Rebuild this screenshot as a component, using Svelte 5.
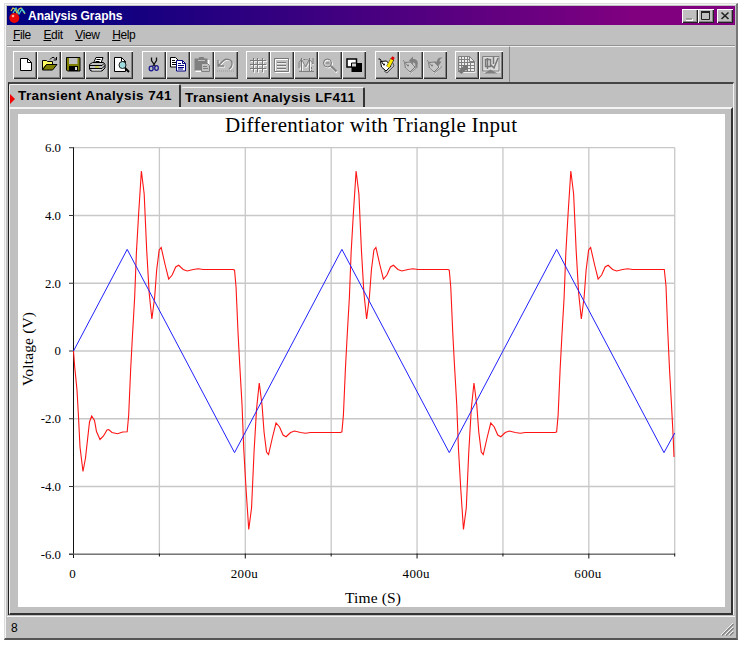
<script>
  const X0 = 73.5, Y0 = 351, PX = 0.8589, PY = 33.88;
  const px = (t) => X0 + t * PX;
  const py = (v) => Y0 - v * PY;

  const vLines = [100, 200, 300, 400, 500, 600, 700].map(px);
  const yTicks = [
    [6, '6.0'], [4, '4.0'], [2, '2.0'], [0, '0'], [-2, '-2.0'], [-4, '-4.0'], [-6, '-6.0']
  ];
  const xTicks = [[0, '0'], [200, '200u'], [400, '400u'], [600, '600u']];

  const triangle = [[0, 0], [62.5, 3], [187.5, -3], [312.5, 3], [437.5, -3], [562.5, 3], [687.5, -3], [700, -2.42]]
    .map(([t, v]) => `${px(t)},${py(v)}`).join(' ');

  // start-up transient, in pixels
  const start = [[73.5, 351], [74.7, 367], [77, 390], [78.5, 417], [80, 447], [83, 471.5], [85.5, 458], [87.7, 438],
    [89.5, 422], [91.7, 416], [94.5, 420.5], [96.5, 431.5], [100, 439.5], [103.5, 436], [107, 430], [108.7, 429.5],
    [112, 432.5], [117.5, 433.8], [122.7, 432]];
  // ringing edge: offset from the switching time and height above the zero line
  const edge = [[0, -80.8], [1.5, -64], [3.5, -18], [5.2, 14], [7.5, 54], [9.2, 98], [11.5, 138], [14.2, 180],
    [17, 157], [19.5, 101], [22, 58], [24.7, 32], [27.5, 54], [29.5, 81], [32, 101], [34, 103.5], [38, 86],
    [41.5, 72], [45, 76], [48.5, 84], [51.5, 85.7], [56, 81.5], [60, 80], [66, 81.5], [71, 82.3], [76, 81.5], [106, 81.5]];
  const response = [...start];
  [62.5, 187.5, 312.5, 437.5, 562.5].forEach((t, i) => {
    const s = i % 2 ? -1 : 1;
    for (const [dx, h] of edge) response.push([px(t) + dx, Y0 - s * h + (s < 0 && h > 170 ? -1.5 : 0)]);
  });
  response.push([664.3, 269.5], [666, 286], [667.7, 330], [669.5, 369], [671.5, 405], [673.2, 437], [674, 457]);
  const responsePts = response.map((p) => p.join(',')).join(' ');

  const menus = ['File', 'Edit', 'View', 'Help'];
  const groups = [
    ['new', 'open', 'save', 'print', 'preview'],
    ['cut', 'copy', 'paste', 'undo'],
    ['grid', 'legend', 'cursors', 'zoom', 'reverse'],
    ['tag', 'tagup', 'tagdown'],
    ['excel', 'mathcad']
  ];
</script>

{#snippet icon(name)}
  <svg class="ico" width="24" height="28" viewBox="0 0 24 28" fill="none">
    {#if name === 'new'}
      <path d="M7.5 7.5h7l4 4v8h-11z" fill="#fff" stroke="#000" /><path d="M14.5 7.5v4h4" stroke="#000" />
    {:else if name === 'open'}
      <path d="M5.5 18.500v-9h4l1 1h5v3h-6z" fill="#ffff60" stroke="#000" />
      <path d="M5.500 19l4-5.500h10.500l-4.500 5.500z" fill="#808000" stroke="#000" />
      <path d="M13 8.500l2-2h2l2 2M19.500 6v3h-3" stroke="#000" />
    {:else if name === 'save'}
      <path d="M5.500 6.500h13.500v13.500h-12.500l-1-1z" fill="#808000" stroke="#000" />
      <path d="M8 7h8.500v6H8z" fill="#c0c0c0" /><path d="M8 15h9v5H8z" fill="#000" /><path d="M14 16h2v3h-2z" fill="#ddd" />
    {:else if name === 'print'}
      <path d="M8.500 12l2.500-5.500h7l-2 5.500z" fill="#fff" stroke="#000" /><path d="M11.500 8.500h4M10.500 10.500h4" stroke="#000" />
      <path d="M4.500 13.500l3-2h11l1.500 2v3.500l-3 3h-11l-1.500-2z" fill="#c0c0c0" stroke="#000" />
      <path d="M5 14.500h12l2-2M5 17.500h12l3-3" stroke="#000" /><path d="M10 16h4" stroke="#cccc00" /><path d="M7 19h9" stroke="#fff" />
    {:else if name === 'preview'}
      <path d="M5.500 6.500h7l4 4v10h-11z" fill="#fff" stroke="#000" /><path d="M12.500 6.500v4h4" stroke="#000" />
      <circle cx="13.500" cy="14" r="3.500" fill="#9edce0" stroke="#222" /><path d="M16 17l4 4" stroke="#000" stroke-width="2" />
    {:else if name === 'cut'}
      <path d="M9.500 6.500v3l4 6M14.500 6.500v3l-4 6" stroke="#111" stroke-width="1.300" />
      <ellipse cx="9.200" cy="17.500" rx="2" ry="2.300" stroke="#1a1a90" stroke-width="1.300" /><ellipse cx="14.500" cy="17" rx="1.800" ry="2.300" stroke="#1a1a90" stroke-width="1.300" />
    {:else if name === 'copy'}
      <path d="M4.500 6.500h5l3 3v6.500h-8z" fill="#fff" stroke="#000" /><path d="M6 9.500h3M6 11.500h5M6 13.500h5" stroke="#000" />
      <path d="M10.500 9.500h6l3 3v7.500h-9z" fill="#fff" stroke="#000080" /><path d="M16.500 9.500v3h3M12 12.500h3M12 14.500h6M12 16.500h6M12 18h5" stroke="#000080" />
    {:else if name === 'paste'}
      <path d="M5.500 9h14v12h-14z" fill="#fff" />
      <path d="M4.500 7.500h4l1-1.500h4l1 1.500h3v12h-13z" fill="#808080" /><path d="M8 9.500h7" stroke="#c0c0c0" />
      <path d="M11.500 12.500h6l2 2v6h-8z" fill="#c0c0c0" stroke="#808080" /><path d="M13 15.500h4M13 17.500h5" stroke="#808080" />
    {:else if name === 'undo'}
      <g stroke="#fff" transform="translate(1 1)"><path d="M4 9v6h6M4.500 14.500l5-5c3-2.500 9-1 8.500 3.500c0 3-2 4-3 5" /></g>
      <path d="M4 9v6h6M4.500 14.500l5-5c3-2.500 9-1 8.500 3.500c0 3-2 4-3 5" stroke="#808080" stroke-width="1.300" /><path d="M3 20h17" stroke="#999" stroke-dasharray="1 1" />
    {:else if name === 'grid'}
      <path d="M8.500 8v14M12.500 8v14M17.500 8v14M5 10.500h16M5 14.500h16M5 18.500h16" stroke="#f4f4f4" />
      <path d="M7.500 7v14M11.500 7v14M16.500 7v14M4 9.500h16M4 13.500h16M4 17.500h16" stroke="#777" />
    {:else if name === 'legend'}
      <path d="M5.500 8.500h14v13h-14z" stroke="#fff" /><path d="M4.500 7.500h14v13h-14z" stroke="#777" />
      <path d="M7 11.500h9M7 14.500h9M7 17.500h9" stroke="#777" /><path d="M7 12.500h9M7 15.500h9M7 18.500h9" stroke="#eee" />
    {:else if name === 'cursors'}
      <path d="M8.500 8v13M16.500 8v13M6 19l2.500-7 4 5 4-7 3 4" stroke="#f4f4f4" />
      <path d="M7.500 7v13M15.500 7v13" stroke="#777" /><path d="M5 17V11M5.500 11l2-3 4 8 4-8 3.500 5v-6M5 20.500h15" stroke="#808080" />
      <path d="M9.500 8.500h4M17.500 16v4" stroke="#777" stroke-dasharray="2 1" />
    {:else if name === 'zoom'}
      <circle cx="10.500" cy="13" r="4" stroke="#fff" /><circle cx="9.500" cy="12" r="4" stroke="#777" />
      <path d="M7.500 12h4" stroke="#777" /><path d="M14 16.500l5 5" stroke="#fff" stroke-width="2" /><path d="M13 15l5.500 5.500" stroke="#808080" stroke-width="2" />
    {:else if name === 'reverse'}
      <path d="M9.500 12h10.500v9H9.500z" fill="#000" /><path d="M5 8h9.500v8H5z" fill="#fff" stroke="#000" stroke-width="1.500" /><path d="M9.500 12h5v4h-5z" fill="#d0d0d0" stroke="#000" />
    {:else if name === 'tag'}
      <path d="M9 20l3 2 7-7-1-3" stroke="#555" />
      <path d="M5.500 10.500l6-.5 4.500 5-5 5-4.500-4z" fill="#fff" stroke="#000" /><circle cx="9" cy="13.500" r="1" fill="#000" />
      <path d="M3.500 8l1.500 0 3 5" stroke="#000" /><path d="M17.500 8l-4.500 8" stroke="#222" stroke-width="4" /><path d="M17 8.500l-4 7.500" stroke="#ffe800" stroke-width="3" />
      <path d="M16.500 6.500l2.500 1.500" stroke="#e00000" stroke-width="3" />
    {:else if name === 'tagup' || name === 'tagdown'}
      <path d="M6 12l6-.5 5 5-5 6-5-5z" stroke="#f8f8f8" /><path d="M5.500 11.500l6-.5 4.500 5-5 5-4.500-4z" fill="#c8c8c8" stroke="#777" />
      <circle cx="9" cy="14.500" r="1" fill="#777" /><path d="M4 9l4 5M11 22.500l8-7" stroke="#888" />
      {#if name === 'tagup'}
        <path d="M10 9.500l4-4v2.500c4 0 6 2.500 4 8l-2 1c1-4 0-5.500-2-5.500v2z" fill="#808080" />
      {:else}
        <path d="M20 6.500c-4-.5-6 1-6 4h-3l4 5 3.500-5h-2c0-2 1-3 3.500-4z" fill="#808080" />
      {/if}
    {:else if name === 'excel'}
      <path d="M4.500 6h11l5 5v11h-16z" fill="#eee" /><path d="M3.500 5.500h11l5 5v10h-16zM14.500 5.500v5h5M6.500 6v14M9.500 6v14M12.500 6v14M15.500 10v10M4 8.500h11M4 11.500h15M4 14.500h15M4 17.500h15" stroke="#808080" />
      <path d="M3 20.500l5-5-2-1.500h7v7l-2-2-4.500 4z" fill="#777" />
    {:else if name === 'mathcad'}
      <path d="M4.500 6h17v16h-17z" fill="#ddd" /><path d="M3.500 5.500h16.500v14.500h-16.500z" stroke="#808080" />
      <path d="M6.500 8.500h5v7h-5zM8.500 7v11M12 14l3 3 4-10M14.500 6v7" stroke="#777" stroke-width="1.500" /><path d="M5 22.500l6.500-4 7 4z" fill="#808080" />
    {/if}
  </svg>
{/snippet}

<div class="page">
  <div class="window">
    <header class="title">
      <svg width="20" height="19" viewBox="0 0 20 19" fill="none">
        <path d="M4 5l2-3 2 1 2 4 2-4 2-1 4 6" stroke="#d8c840" stroke-width="1.300" />
        <path d="M6 7l3-5 3 6 3-5 3 4" stroke="#40c8d8" stroke-width="1.300" />
        <circle cx="7.300" cy="12" r="5" fill="#e80808" /><circle cx="6" cy="10" r="1.300" fill="#ffb0a0" />
      </svg>
      <span class="name">Analysis Graphs</span>
      <div class="controls">
        <span class="ctl"><svg width="16" height="14"><path d="M4 11h7" stroke="#fff" stroke-width="2" /><path d="M4 10h6" stroke="#888" stroke-width="1.500" /></svg></span>
        <span class="ctl"><svg width="16" height="14"><path d="M3.500 3.500h8v7h-8z" fill="none" stroke="#222" /><path d="M3 3h9" stroke="#222" stroke-width="2" /></svg></span>
        <span class="ctl close"><svg width="16" height="14"><path d="M4.500 3.500l7 6.500M11.500 3.500l-7 6.500" stroke="#222" stroke-width="1.600" /></svg></span>
      </div>
    </header>
    <nav class="menu">
      {#each menus as m}<span><u>{m[0]}</u>{m.slice(1)}</span>{/each}
    </nav>
    <div class="toolbar">
      {#each groups as g}
        <div class="group">
          {#each g as name}<button class="tool" aria-label={name}>{@render icon(name)}</button>{/each}
        </div>
      {/each}
    </div>
    <main class="sheet">
      <div class="tabs">
        <div class="tab active"><i class="marker"></i><span class="t1">Transient Analysis 741</span></div>
        <div class="tab"><span class="t2">Transient Analysis LF411</span></div>
      </div>
      <div class="pane">
        <svg class="chart" width="707" height="493" viewBox="18 114 707 493" fill="none">
          <text x="225" y="132" font-size="21" textLength="292">Differentiator with Triangle Input</text>
          <g stroke="#c8c8c8" stroke-width="1.300">
            {#each vLines as x}<line x1={x} x2={x} y1="147.500" y2="554" />{/each}
            {#each yTicks as [v]}<line x1="73" x2="674.700" y1={py(v)} y2={py(v)} />{/each}
          </g>
          <g stroke="#111">
            <path d="M73.500 147.500V558" />
            <path d="M69 554.200H675" stroke="#777" stroke-width="1.600" />
            {#each yTicks as [v]}<line x1="69" x2="74" y1={py(v)} y2={py(v)} stroke="#333" />{/each}
            {#each vLines as x, i}<line x1={x} x2={x} y1="553.500" y2={i % 2 ? 558.5 : 556.5} />{/each}
          </g>
          <polyline points={responsePts} stroke="#ff1414" stroke-width="1.100" />
          <polyline points={triangle} stroke="#2020ff" />
          {#each yTicks as [v, l]}
            <text x="61" y={py(v) + 4.3} text-anchor="end" font-size="12.800">{l}</text>
          {/each}
          {#each xTicks as [t, l]}
            <text x={px(t) - 1} y="578" text-anchor="middle" font-size="13" textLength={l.length > 1 ? 27 : 6}>{l}</text>
          {/each}
          <text x="345" y="603" font-size="15.500" textLength="56">Time (S)</text>
          <text transform="translate(32.500 386) rotate(-90)" font-size="15.500" textLength="74">Voltage (V)</text>
        </svg>
      </div>
    </main>
    <footer class="status">
      <span>8</span>
      <svg width="14" height="14" fill="none"><path d="M1 13L13 1M5 13l8-8M9 13l4-4" stroke="#fff" /><path d="M2 13.500L13.500 2M6 13.500L13.500 6M10 13.500l3.500-3.500" stroke="#808080" stroke-width="1.300" /></svg>
    </footer>
  </div>
</div>

<style>
  :global(body) { background: #fff; }
  .page { box-sizing: border-box; width: 741px; height: 647px; padding: 3px 0 0 4px; overflow: hidden; background: #fff; font-family: 'Liberation Sans', Arial, sans-serif; color: #000; }
  .window { box-sizing: border-box; width: 734px; height: 637px; background: #c0c0c0; border: 1px solid #dcdcdc; border-right: 2px solid #777; border-bottom: 2px solid #555; padding: 2px 1px 0 2px; display: flex; flex-direction: column; box-shadow: inset 1px 1px #f4f4f4; }
  .title { height: 19px; flex: none; display: flex; align-items: center; background: linear-gradient(90deg, #000080, #0c0080 12%, #800080 86%); color: #fff; }
  .title > svg { flex: none; }
  .name { margin-left: 1px; font-weight: bold; font-size: 12px; letter-spacing: -.02px; white-space: nowrap; line-height: 18px; }
  .controls { margin-left: auto; margin-right: 2px; display: flex; }
  .ctl { display: block; width: 16px; height: 14px; background: #c0c0c0; box-shadow: inset 1px 1px #fff, inset -1px -1px #222, inset -2px -2px #888; }
  .ctl svg { display: block; }
  .close { margin-left: 3px; }
  .menu { height: 20px; flex: none; display: flex; gap: 12.500px; padding-left: 6px; font-size: 12px; line-height: 20px; letter-spacing: -.35px; border-bottom: 1px solid #929292; box-shadow: 0 1px #f0f0f0; }
  .menu u { text-underline-offset: 1px; }
  .toolbar { height: 36px; flex: none; box-sizing: border-box; width: 503px; padding: 4px 0 0 6px; display: flex; gap: 9px; border-right: 1px solid #888; border-top: 1px solid transparent; background-clip: padding-box; }
  .group { display: flex; }
  .group:nth-child(3) { margin-left: -1px; }
  .group:nth-child(5) { margin-left: -1px; }
  .tool { width: 24px; height: 28px; border: 0; padding: 0; background: #c0c0c0; box-shadow: inset 1px 1px #fff, inset -1px -1px #303030, inset -2px -2px #808080; }
  .ico { display: block; }
  .sheet { flex: none; height: 533px; width: 726px; margin-left: 1px; box-sizing: border-box; border-top: 2px solid #444; border-left: 1px solid #222; border-right: 1px solid #f4f4f4; display: flex; flex-direction: column; }
  .tabs { height: 23px; flex: none; display: flex; align-items: flex-end; }
  .tab { box-sizing: border-box; height: 20px; line-height: 19px; font-weight: bold; font-size: 13.500px; white-space: nowrap; border-top: 1px solid #f4f4f4; border-right: 2px solid #333; border-radius: 2px 2px 0 0; width: 184px; padding-left: 4px; }
  .active { width: 172px; height: 23px; padding-left: 0; border-left: 1px solid #eee; display: flex; align-items: center; line-height: 20px; position: relative; z-index: 1; }
  .marker { border: 5px solid transparent; border-left-color: #f00000; border-right: 0; margin-right: 3px; margin-top: 5px; }
  .t1 { letter-spacing: .4px; }
  .t2 { letter-spacing: .4px; }
  .pane { flex: none; box-sizing: border-box; height: 508px; width: 724px; border-top: 2px solid #f4f4f4; border-left: 1px solid #f4f4f4; border-right: 2px solid #333; border-bottom: 2px solid #333; padding: 5px 0 0 8px; }
  .chart { display: block; background: #fff; font-family: 'Liberation Serif', 'Times New Roman', serif; }
  .chart text { fill: #000; }
  .status { flex: 1; margin-top: 1px; border-top: 1px solid #f4f4f4; display: flex; justify-content: space-between; align-items: center; padding: 0 1px 0 4px; font-size: 12px; }
  .status svg { align-self: flex-end; margin-bottom: 2px; }
</style>
